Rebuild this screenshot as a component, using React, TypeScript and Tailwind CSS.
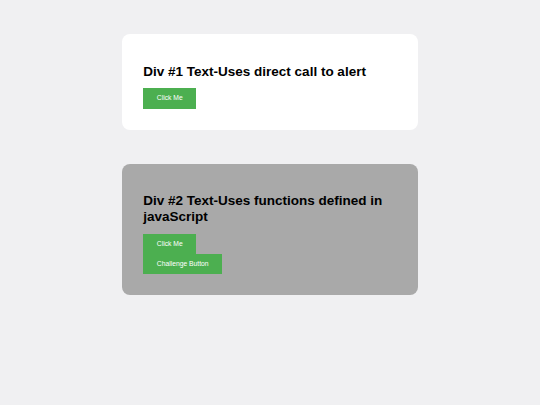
import React from 'react';

const GreenButton: React.FC<{ label: string }> = ({ label }) => (
    <button
        onClick={() => alert(label)}
        className="h-[20.4px] px-[13.5px] bg-[#4caf50] text-white text-[6.75px] leading-none flex items-center"
    >
        {label}
    </button>
);

const App: React.FC = () => {
    return (
        <div
            className="min-h-[405px] w-full bg-[#f0f0f2] text-black"
            style={{ fontFamily: '"Liberation Sans", Arial, sans-serif' }}
        >
            <div className="w-[296px] mx-auto pt-[34px] flex flex-col gap-[34px]">
                {/* Div #1 */}
                <div className="bg-white rounded-[8px] px-[21.3px] pt-[29.5px] pb-[21px]">
                    <h2 className="text-[13.5px] leading-[15.6px] font-bold mb-[9.3px]">
                        Div #1 Text-Uses direct call to alert
                    </h2>
                    <div className="flex flex-col items-start">
                        <GreenButton label="Click Me" />
                    </div>
                </div>

                {/* Div #2 */}
                <div className="bg-[#a9a9a9] rounded-[8px] px-[21.3px] pt-[29.5px] pb-[21px]">
                    <h2 className="text-[13.5px] leading-[15.7px] font-bold mb-[9px]">
                        Div #2 Text-Uses functions defined in javaScript
                    </h2>
                    <div className="flex flex-col items-start">
                        <GreenButton label="Click Me" />
                        <GreenButton label="Challenge Button" />
                    </div>
                </div>
            </div>
        </div>
    );
};

export default App;
